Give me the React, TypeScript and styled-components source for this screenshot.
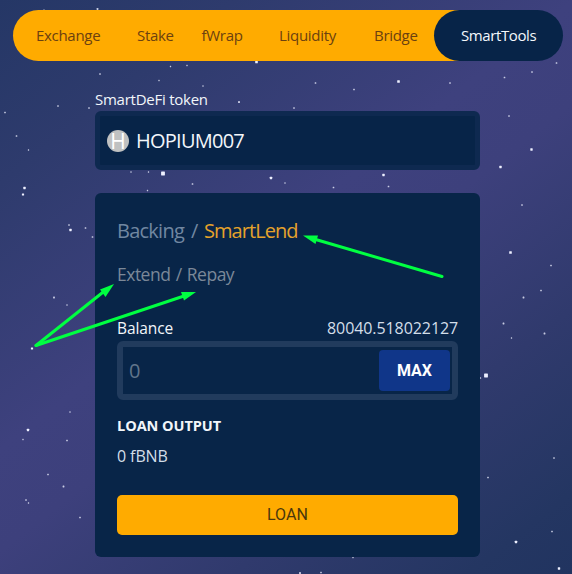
import React from "react";
import styled, { createGlobalStyle } from "styled-components";

const GlobalStyle = createGlobalStyle`
  * { box-sizing: border-box; }
  body { margin: 0; }
`;

const Page = styled.div`
  position: relative;
  width: 572px;
  height: 574px;
  overflow: hidden;
  padding: 10px 9px 0 13px;
  font-family: "Open Sans", "Noto Sans", sans-serif;
  color: #f2f6fa;
  background: linear-gradient(142deg, #253766 0%, #2e3b6d 18%, #3e417e 44%, #3d407c 54%, #303a6d 74%, #243662 92%, #213460 100%);
`;

const Overlay = styled.svg`
  position: absolute;
  inset: 0;
  pointer-events: none;
`;

const Nav = styled.nav`
  position: relative;
  display: flex;
  height: 51px;
  border-radius: 26px;
  background: linear-gradient(90deg, #ffab00 0 485px, transparent 485px);
`;

const NavItem = styled.a<{ $width: number; $active?: boolean }>`
  display: flex;
  align-items: center;
  justify-content: center;
  width: ${(p) => p.$width}px;
  height: 51px;
  padding-bottom: 2px;
  border-radius: 26px;
  color: ${(p) => (p.$active ? "#f4f8fc" : "#6b4110")};
  background: ${(p) => (p.$active ? "#072448" : "transparent")};
`;

const Label = styled.span<{
  $size: number;
  $width: number;
  $spacing?: number;
  $wordSpacing?: number;
  $weight?: number;
  $color?: string;
}>`
  display: block;
  flex: none;
  width: ${(p) => p.$width}px;
  white-space: nowrap;
  font-size: ${(p) => p.$size}px;
  line-height: 22px;
  font-weight: ${(p) => p.$weight ?? 400};
  letter-spacing: ${(p) => p.$spacing ?? 0}px;
  word-spacing: ${(p) => p.$wordSpacing ?? 0}px;
  color: ${(p) => p.$color ?? "inherit"};
`;

const Column = styled.main`
  position: relative;
  width: 385px;
  margin: 27px 0 0 82px;
`;

const TokenField = styled.div`
  display: flex;
  align-items: center;
  height: 59px;
  margin-top: 1px;
  padding: 1px 0 0 8px;
  border: 5px solid #0e2950;
  border-radius: 6px;
  background: #072448;
`;

const TokenLogo = styled.span`
  display: flex;
  align-items: center;
  justify-content: center;
  width: 22px;
  height: 22px;
  margin: 0 7px 0 -1px;
  border-radius: 50%;
  background: #bfc1c1;
  color: #fff;
  font-size: 21px;
  line-height: 22px;
`;

const Card = styled.section`
  height: 364px;
  margin-top: 23px;
  padding: 27px 22px 22px;
  border-radius: 6px;
  background: #082548;
`;

const Row = styled.div<{ $top?: number; $between?: boolean }>`
  display: flex;
  align-items: center;
  justify-content: ${(p) => (p.$between ? "space-between" : "flex-start")};
  height: 22px;
  margin-top: ${(p) => p.$top ?? 0}px;
`;

const AmountField = styled.div`
  display: flex;
  align-items: center;
  justify-content: space-between;
  height: 59px;
  margin-top: 2px;
  padding: 0 2px 0 6px;
  border: 6px solid #213b5d;
  border-radius: 6px;
`;

const MaxButton = styled.button`
  width: 71px;
  height: 41px;
  padding: 0;
  border: 0;
  border-radius: 4px;
  background: #103689;
  color: #fff;
  font: 700 16px Roboto, sans-serif;
  letter-spacing: 0;
`;

const LoanButton = styled.button`
  width: 100%;
  height: 40px;
  margin-top: 28px;
  padding: 0 0 1px;
  border: 0;
  border-radius: 5px;
  background: #ffab00;
  color: #4a370c;
  font: 400 16px Roboto, sans-serif;
  letter-spacing: 0.1px;
`;

// x, y, size
const stars: [number, number, number][] = [
  [5, 112.5, 1.6], [58, 106, 1.6], [89, 108, 1.6], [16.5, 136, 1.6], [28.5, 150, 1.4],
  [24.5, 188, 2.4], [23, 194.5, 2.2], [69, 225, 1.6], [70.5, 230, 2.4], [85.5, 228, 1.6],
  [92.5, 237, 1.6], [54, 297.5, 1.8], [67, 305, 1.4], [32, 348.5, 2.2], [70, 412, 1.4],
  [28, 430, 2.3], [23, 439.5, 1.4], [67, 440.5, 1.6], [48, 474.5, 1.6], [63.5, 486.5, 1.8],
  [26, 500, 1.6], [28.5, 503, 1.4], [80, 517.5, 1.6], [97.5, 9, 1.8], [44, 9.5, 1],
  [100, 74, 1.6], [170.5, 66.5, 1.4], [187, 65.5, 1.4], [256.5, 62, 2.6], [159, 80.5, 1.4],
  [203, 86, 1.4], [239, 102, 2], [294, 108, 1.6], [315.5, 83, 1.6], [354, 89.5, 1.6],
  [398.5, 81.5, 2.6], [450, 83, 1.6], [504.5, 77.5, 1.6], [532, 72, 1.6], [556.5, 63, 1.6],
  [509, 116, 1.6], [531.5, 149.5, 2.4], [500.5, 167, 2.4], [522, 205, 1.6], [510.5, 252.5, 2.6],
  [551, 265.5, 1.6], [541, 290.5, 1.6], [523.5, 297.5, 1.8], [503.5, 323.5, 1.8],
  [511.5, 338, 1.4], [544.5, 333.5, 1.8], [486, 375.5, 3.8], [480.5, 378, 1.4],
  [554, 458, 1.6], [488, 477.5, 1.6], [552, 531.5, 1.6], [516, 542, 2.4],
  [559, 568.5, 2.4], [131, 172, 1.4], [148.5, 172, 1.4], [163, 173.5, 3.8],
  [192.5, 184, 1.6], [147.5, 190.5, 1.4], [271, 178, 2.4], [285, 183, 1.4], [333.5, 187.5, 1.6],
  [383.5, 175, 2.4], [388.5, 186.5, 1.6],
  [300, 573, 2], [321, 572.5, 1.6], [353, 557.5, 1.4],
];

const Stars = () => (
  <Overlay width="572" height="574">
    {stars.map(([x, y, s], i) => (
      <rect key={i} x={x - s / 2} y={y - s / 2} width={s} height={s} rx={0.4} fill="#eef0ff" opacity={s > 2 ? 1 : 0.8} />
    ))}
  </Overlay>
);

const Arrows = () => (
  <Overlay width="572" height="574" fill="#00ff41" stroke="#00ff41">
    <g strokeWidth="3" strokeLinecap="round">
      <path d="M36 345.5 107 289" />
      <path d="M36 345.5 184 296" />
      <path d="M442 276.5 314 239" />
    </g>
    <g stroke="none">
      <path d="M114 284 105.5 297 100 289.5Z" />
      <path d="M196 292 184 300.5 181 292Z" />
      <path d="M303 235.5 318 235.5 315.5 244Z" />
    </g>
  </Overlay>
);

export default function App() {
  return (
    <Page>
      <GlobalStyle />
      <Stars />
      <Nav>
        <NavItem $width={110}><Label $size={15} $width={64} $spacing={-0.3}>Exchange</Label></NavItem>
        <NavItem $width={64}><Label $size={15} $width={36} $spacing={-0.3}>Stake</Label></NavItem>
        <NavItem $width={70}><Label $size={15} $width={41} $spacing={-0.3}>fWrap</Label></NavItem>
        <NavItem $width={101}><Label $size={15} $width={57} $spacing={-0.3}>Liquidity</Label></NavItem>
        <NavItem $width={76}><Label $size={15} $width={44} $spacing={-0.3}>Bridge</Label></NavItem>
        <NavItem $width={129} $active><Label $size={15} $width={75} $spacing={-0.4}>SmartTools</Label></NavItem>
      </Nav>
      <Column>
        <Label $size={15} $width={114} $spacing={-0.25}>SmartDeFi token</Label>
        <TokenField>
          <TokenLogo>H</TokenLogo>
          <Label $size={20} $width={110} $spacing={-0.75}>HOPIUM007</Label>
        </TokenField>
        <Card>
          <Row>
            <Label $size={20} $width={87} $spacing={-0.75} $wordSpacing={2.5} $color="#7187a1">Backing /</Label>
            <Label $size={20} $width={95} $spacing={-0.95} $color="#e5a22b">SmartLend</Label>
          </Row>
          <Row $top={21}>
            <Label $size={17.5} $width={118} $spacing={-0.5} $wordSpacing={1.2} $color="#7b8898">Extend / Repay</Label>
          </Row>
          <Row $top={32} $between>
            <Label $size={15.5} $width={57} $spacing={-0.1}>Balance</Label>
            <Label $size={16} $width={131} $spacing={-0.08} $color="#d3dee9">80040.518022127</Label>
          </Row>
          <AmountField>
            <Label $size={20} $width={12} $color="#61758b">0</Label>
            <MaxButton>MAX</MaxButton>
          </AmountField>
          <Row $top={15}>
            <Label $size={14.5} $width={105} $spacing={-0.05} $weight={700}>LOAN OUTPUT</Label>
          </Row>
          <Row $top={8}>
            <Label $size={16} $width={51} $spacing={-0.1} $color="#d3dee9">0 fBNB</Label>
          </Row>
          <LoanButton>LOAN</LoanButton>
        </Card>
      </Column>
      <Arrows />
    </Page>
  );
}
